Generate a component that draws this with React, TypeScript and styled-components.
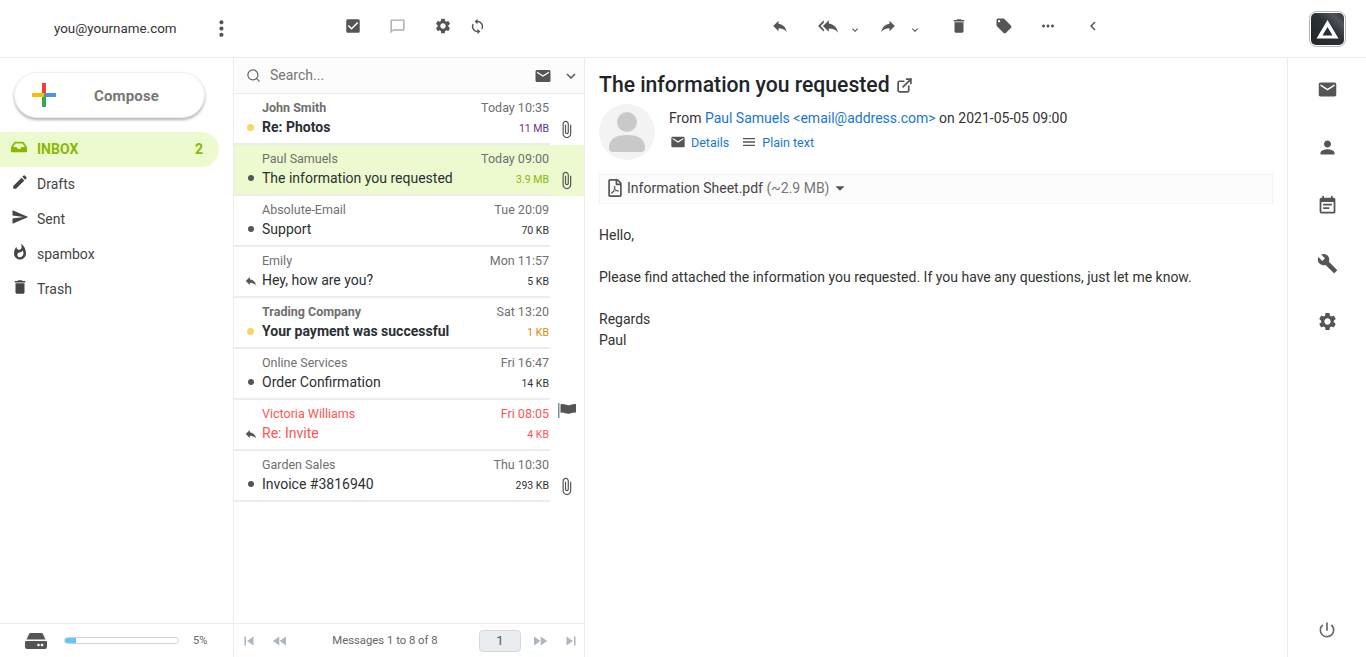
import React from "react";
import styled, { createGlobalStyle } from "styled-components";
import {
  MdMail, MdPerson, MdEventNote, MdBuild, MdSettings, MdPowerSettingsNew, MdReply, MdReplyAll,
  MdDelete, MdLocalOffer, MdMoreHoriz, MdChevronLeft, MdCheckBox, MdChatBubbleOutline, MdSync,
  MdMoreVert, MdEdit, MdSend, MdWhatshot, MdAttachFile, MdSkipPrevious, MdSkipNext, MdFastRewind,
  MdFastForward, MdMenu, MdArrowDropDown, MdKeyboardArrowDown,
} from "react-icons/md";
import { FaInbox, FaRegFilePdf } from "react-icons/fa";
import { FiExternalLink, FiSearch } from "react-icons/fi";

const Global = createGlobalStyle`
  html, body { margin: 0; padding: 0; height: 100%; background: #fff; }
  body { font-family: Roboto, "Liberation Sans", sans-serif; color: #212529; font-size: 14px; overflow: hidden; }
  * { box-sizing: border-box; }
`;

const Page = styled.div`
  width: 1366px; height: 657px; display: flex; flex-direction: column; overflow: hidden;
`;
const TopBar = styled.header`
  height: 58px; flex: none; display: flex; align-items: center; border-bottom: 1px solid #ececec; color: #555;
`;
const Account = styled.div`
  width: 234px; flex: none; display: flex; align-items: center; padding-left: 54px; font-size: 13.4px; color: #333;
`;
const AccountName = styled.span` width: 156px; `;
const ListTools = styled.div`
  width: 351px; flex: none; display: flex; align-items: center; padding-left: 110px; margin-top: -5px;
`;
const ToolSlot = styled.span<{ $w: number; $color?: string }>`
  width: ${(p) => p.$w}px; display: flex; align-items: center; color: ${(p) => p.$color || "#555"};
`;
const MailTools = styled.div`
  flex: 1; display: flex; align-items: center; padding-left: 186px; margin-top: -5px;
`;
const Caret = styled(MdKeyboardArrowDown)<{ $gap: number }>`
  margin: 8px 0 0 ${(p) => p.$gap}px;
`;
const Logo = styled.svg`
  position: absolute; left: 1309px; top: 11px;
`;
const Body = styled.div`
  flex: 1; min-height: 0; display: flex;
`;
const Sidebar = styled.aside`
  width: 234px; flex: none; display: flex; flex-direction: column; border-right: 1px solid #ececec;
`;
const ComposeButton = styled.button`
  margin: 14px 0 0 14px; width: 191px; height: 46px; flex: none; border: 1px solid #efefef; border-radius: 23px;
  background: #fff; box-shadow: 0 2px 3px rgba(0,0,0,.3); display: flex; align-items: center; padding: 0 0 0 17px;
  font-family: inherit; font-size: 15px; font-weight: 700; color: #777; letter-spacing: .15px;
`;
const ComposeLabel = styled.span` margin: 2px 0 0 38px; `;
const FolderList = styled.nav`
  margin-top: 14px; flex: 1; display: flex; flex-direction: column;
`;
const Folder = styled.div<{ $active?: boolean }>`
  width: 219px; height: 35px; display: flex; align-items: center; padding: 0 16px 2px 11px; font-size: 14px;
  border-radius: 0 18px 18px 0;
  color: ${(p) => (p.$active ? "#8ab800" : "#444")};
  background: ${(p) => (p.$active ? "#edfad0" : "transparent")};
  font-weight: ${(p) => (p.$active ? 700 : 400)};
`;
const FolderIcon = styled.span`
  width: 26px; display: flex; align-items: center; margin-top: -3px; color: inherit;
`;
const FolderName = styled.span` flex: 1; `;
const Quota = styled.div`
  height: 34px; flex: none; border-top: 1px solid #ececec; display: flex; align-items: center; padding-left: 25px; font-size: 11px; color: #666;
`;
const Track = styled.div`
  width: 115px; height: 7px; margin-left: 17px; border: 1px solid #ced4da; border-radius: 4px; overflow: hidden; background: #fff;
`;
const Fill = styled.div` height: 100%; background: #62c6f8; `;
const QuotaText = styled.span` margin-left: 14px; `;

const ListPane = styled.section`
  width: 351px; flex: none; display: flex; flex-direction: column; border-right: 1px solid #ececec;
`;
const SearchBar = styled.div`
  height: 36px; flex: none; background: #fcfcfc; border-bottom: 1px solid #ececec; display: flex; align-items: center;
  padding: 0 4px 0 12px; color: #666;
`;
const SearchHint = styled.span` flex: 1; margin: 0 0 1px 9px; font-size: 14px; color: #757575; `;
const SearchChevron = styled(MdKeyboardArrowDown)` margin-left: 10px; color: #555; `;
const Rows = styled.div` flex: 1; `;
const Row = styled.div<{ $selected?: boolean }>`
  position: relative; height: 51px; padding: 6px 0 0 28px; width: 350px;
  background: ${(p) => (p.$selected ? "#edfad0" : "#fff")};
  &::after { content: ""; position: absolute; left: 0; bottom: 0; width: 316px; height: 2px; background: #ececec; }
`;
const RowLine = styled.div<{ $gap?: number }>`
  width: 287px; display: flex; justify-content: space-between; align-items: baseline; margin-top: ${(p) => p.$gap || 0}px;
`;
const Sender = styled.span<{ $unread?: boolean; $flag?: boolean }>`
  font-size: 12.5px; line-height: 16px; font-weight: ${(p) => (p.$unread ? 700 : 400)};
  color: ${(p) => (p.$flag ? "#ff5552" : "#6f6f6f")};
`;
const Time = styled.span<{ $flag?: boolean }>`
  font-size: 12.5px; line-height: 16px; color: ${(p) => (p.$flag ? "#ff5552" : "#6f6f6f")};
`;
const Subject = styled.span<{ $unread?: boolean; $flag?: boolean }>`
  font-size: 14px; line-height: 18px; font-weight: ${(p) => (p.$unread ? 700 : 400)};
  color: ${(p) => (p.$flag ? "#ff5552" : "#2b2f33")};
`;
const Size = styled.span<{ $color?: string }>`
  font-size: 10.5px; color: ${(p) => p.$color || "#333"};
`;
const Dot = styled.span<{ $unread?: boolean }>`
  position: absolute; left: ${(p) => (p.$unread ? 13 : 14)}px; top: 30px;
  width: ${(p) => (p.$unread ? 7 : 6)}px; height: ${(p) => (p.$unread ? 7 : 6)}px; border-radius: 50%;
  background: ${(p) => (p.$unread ? "#fbd65f" : "#555")};
`;
const ReplyMark = styled(MdReply)` position: absolute; left: 10px; top: 27px; color: #555; `;
const Clip = styled(MdAttachFile)` position: absolute; left: 323px; top: 26px; color: #555; `;
const FlagMark = styled.svg` position: absolute; left: 324px; top: 3px; `;
const Pager = styled.div`
  height: 34px; flex: none; border-top: 1px solid #ececec; display: flex; align-items: center; padding-left: 6px; color: #adb5bd;
`;
const PagerIcons = styled.span`
  display: flex; align-items: center; gap: 13px;
`;
const PagerText = styled.span` width: 154px; margin-left: 19px; text-align: center; font-size: 11.3px; color: #666; `;
const PageBox = styled.span`
  width: 42px; height: 22px; border: 1px solid #d4d8dc; border-radius: 4px; background: #e9ecef; margin: 0 10px 0 17px;
  display: flex; align-items: center; justify-content: center; font-size: 13px; color: #555;
`;

const Preview = styled.main`
  flex: 1; min-width: 0; padding: 14px 14px 0; display: flex; flex-direction: column;
`;
const Title = styled.h1`
  margin: 0; font-size: 21.15px; line-height: 26px; font-weight: 500; color: #212529; display: flex; align-items: center; gap: 6px;
`;
const TitleLink = styled(FiExternalLink)` color: #555; margin-top: 1px; stroke-width: 2.4; `;
const Header = styled.div` display: flex; margin-top: 6px; `;
const Avatar = styled.div`
  width: 56px; height: 56px; flex: none; border-radius: 50%; background: #f3f3f3; display: flex; align-items: center; justify-content: center;
`;
const Meta = styled.div` margin-left: 14px; padding-top: 4px; `;
const FromLine = styled.div` line-height: 20px; color: #333; `;
const Blue = styled.span` color: #1976d2; `;
const Links = styled.div` display: flex; align-items: center; margin: 4px 0 0 1px; height: 20px; font-size: 12.5px; color: #1976d2; `;
const LinkItem = styled.span`
  display: flex; align-items: center; gap: 5px; margin-right: 12px;
  svg { color: #555; }
`;
const Attachment = styled.div`
  margin-top: 14px; width: 674px; height: 30px; background: #fcfcfc; border: 1px solid #f3f3f3; display: flex; align-items: center;
  padding: 0 0 2px 6px; color: #444; font-size: 14px; gap: 3px;
`;
const AttachSize = styled.span` color: #777; `;
const AttachDrop = styled(MdArrowDropDown)` margin-left: -4px; color: #555; `;
const Message = styled.div` margin-top: 21px; line-height: 21px; color: #333; font-size: 14px; `;
const Para = styled.p` margin: 0 0 21px; `;

const Rail = styled.aside`
  width: 79px; flex: none; border-left: 1px solid #ececec; display: flex; flex-direction: column; align-items: center; color: #555; padding: 21px 0 17px 0;
`;
const RailIcon = styled.span`
  height: 58px; flex: none; display: flex; align-items: flex-start; justify-content: center;
`;
const RailSpacer = styled.div` flex: 1; `;
const RailPower = styled.span` display: flex; color: #666; `;

const ComposeMark = () => (
  <svg width="24" height="24" viewBox="0 0 24 24">
    <rect x="10" y="0" width="4" height="12" fill="#ea4335" />
    <rect x="12" y="10" width="12" height="4" fill="#4f8ef7" />
    <rect x="10" y="12" width="4" height="12" fill="#34a853" />
    <rect x="0" y="10" width="12" height="4" fill="#fbbc05" />
  </svg>
);

const Drive = () => (
  <svg width="22" height="16" viewBox="0 0 22 16" fill="#555">
    <path d="M6 0h10c1 0 1.6.5 2 1.2L20.5 6.5H1.5L4 1.2C4.4.5 5 0 6 0z" />
    <path d="M1 8h20a1 1 0 0 1 1 1v5a2 2 0 0 1-2 2H2a2 2 0 0 1-2-2V9a1 1 0 0 1 1-1z" />
    <circle cx="13.5" cy="12" r="1.3" fill="#fff" />
    <circle cx="17" cy="12" r="1.3" fill="#fff" />
  </svg>
);

const AppLogo = () => (
  <Logo width="37" height="36" viewBox="0 0 37 36">
    <defs>
      <linearGradient id="lg" x1="0" y1="1" x2="1" y2="0">
        <stop offset="0" stopColor="#22272b" />
        <stop offset="0.55" stopColor="#2b3036" />
        <stop offset="0.8" stopColor="#50555c" />
        <stop offset="1" stopColor="#2b3036" />
      </linearGradient>
    </defs>
    <rect x="0.5" y="0.5" width="36" height="35" rx="7" fill="#fff" stroke="#b5b5b5" />
    <rect x="2" y="2" width="33" height="32" rx="5" fill="url(#lg)" />
    <path d="M18.5 9 L29.5 27.5 H7.5 Z M18.5 16 L13.5 24.5 H23.5 Z" fill="#fff" fillRule="evenodd" />
  </Logo>
);

const AvatarFigure = () => (
  <svg width="36" height="40" viewBox="0 0 36 40" fill="#c9c9c9">
    <circle cx="18" cy="10" r="10" />
    <path d="M0 36c0-9 6-13 18-13s18 4 18 13c0 3-2 4-4 4H4c-2 0-4-1-4-4z" />
  </svg>
);

const RowFlag = () => (
  <FlagMark width="19" height="15" viewBox="0 0 19 15">
    <rect x="0" y="0" width="1.5" height="15" fill="#7d8f9c" />
    <path d="M2.5 1.5C6 0 8 3 12 2c2-.5 4-1.2 6-1v8.5c-2-.2-4 .5-6 1-4 1-6-2-9.5-.8z" fill="#555" />
  </FlagMark>
);

type Msg = {
  sender: string; subject: string; time: string; size: string; unread?: boolean; selected?: boolean;
  flag?: boolean; replied?: boolean; clip?: boolean; sizeColor?: string;
};
const messages: Msg[] = [
  { sender: "John Smith", subject: "Re: Photos", time: "Today 10:35", size: "11 MB", unread: true, clip: true, sizeColor: "#6a2c91" },
  { sender: "Paul Samuels", subject: "The information you requested", time: "Today 09:00", size: "3.9 MB", selected: true, clip: true, sizeColor: "#8ab800" },
  { sender: "Absolute-Email", subject: "Support", time: "Tue 20:09", size: "70 KB" },
  { sender: "Emily", subject: "Hey, how are you?", time: "Mon 11:57", size: "5 KB", replied: true },
  { sender: "Trading Company", subject: "Your payment was successful", time: "Sat 13:20", size: "1 KB", unread: true, sizeColor: "#e08a00" },
  { sender: "Online Services", subject: "Order Confirmation", time: "Fri 16:47", size: "14 KB" },
  { sender: "Victoria Williams", subject: "Re: Invite", time: "Fri 08:05", size: "4 KB", flag: true, replied: true, sizeColor: "#ff5552" },
  { sender: "Garden Sales", subject: "Invoice #3816940", time: "Thu 10:30", size: "293 KB", clip: true },
];

const folders = [
  { name: "Drafts", icon: <MdEdit size={18} /> },
  { name: "Sent", icon: <MdSend size={18} /> },
  { name: "spambox", icon: <MdWhatshot size={18} /> },
  { name: "Trash", icon: <MdDelete size={18} /> },
];

export default function App() {
  return (
    <Page>
      <Global />
      <TopBar>
        <Account>
          <AccountName>you@yourname.com</AccountName>
          <MdMoreVert size={25} color="#555" />
        </Account>
        <ListTools>
          <ToolSlot $w={45}><MdCheckBox size={18} /></ToolSlot>
          <ToolSlot $w={45} $color="#aaa"><MdChatBubbleOutline size={17} /></ToolSlot>
          <ToolSlot $w={35}><MdSettings size={18} /></ToolSlot>
          <ToolSlot $w={30}><MdSync size={17} /></ToolSlot>
        </ListTools>
        <MailTools>
          <ToolSlot $w={47}><MdReply size={18} /></ToolSlot>
          <ToolSlot $w={61}><MdReplyAll size={20} /><Caret size={12} $gap={11} /></ToolSlot>
          <ToolSlot $w={71}><MdReply size={18} style={{ transform: "scaleX(-1)" }} /><Caret size={12} $gap={12} /></ToolSlot>
          <ToolSlot $w={45}><MdDelete size={18} /></ToolSlot>
          <ToolSlot $w={44}><MdLocalOffer size={18} /></ToolSlot>
          <ToolSlot $w={45}><MdMoreHoriz size={18} /></ToolSlot>
          <ToolSlot $w={20}><MdChevronLeft size={18} /></ToolSlot>
        </MailTools>
        <AppLogo />
      </TopBar>
      <Body>
        <Sidebar>
          <ComposeButton>
            <ComposeMark />
            <ComposeLabel>Compose</ComposeLabel>
          </ComposeButton>
          <FolderList>
            <Folder $active>
              <FolderIcon><FaInbox size={16} /></FolderIcon>
              <FolderName>INBOX</FolderName>
              <span>2</span>
            </Folder>
            {folders.map((f) => (
              <Folder key={f.name}>
                <FolderIcon>{f.icon}</FolderIcon>
                <FolderName>{f.name}</FolderName>
              </Folder>
            ))}
          </FolderList>
          <Quota>
            <Drive />
            <Track><Fill style={{ width: "10%" }} /></Track>
            <QuotaText>5%</QuotaText>
          </Quota>
        </Sidebar>
        <ListPane>
          <SearchBar>
            <FiSearch size={15} />
            <SearchHint>Search...</SearchHint>
            <MdMail size={18} color="#555" />
            <SearchChevron size={18} />
          </SearchBar>
          <Rows>
            {messages.map((m) => (
              <Row key={m.sender} $selected={m.selected}>
                {m.replied ? <ReplyMark size={14} /> : <Dot $unread={m.unread} />}
                {m.clip && <Clip size={19} />}
                {m.flag && <RowFlag />}
                <RowLine>
                  <Sender $unread={m.unread} $flag={m.flag}>{m.sender}</Sender>
                  <Time $flag={m.flag}>{m.time}</Time>
                </RowLine>
                <RowLine $gap={2}>
                  <Subject $unread={m.unread} $flag={m.flag}>{m.subject}</Subject>
                  <Size $color={m.sizeColor}>{m.size}</Size>
                </RowLine>
              </Row>
            ))}
          </Rows>
          <Pager>
            <PagerIcons>
              <MdSkipPrevious size={18} />
              <MdFastRewind size={18} />
            </PagerIcons>
            <PagerText>Messages 1 to 8 of 8</PagerText>
            <PageBox>1</PageBox>
            <PagerIcons>
              <MdFastForward size={18} />
              <MdSkipNext size={18} />
            </PagerIcons>
          </Pager>
        </ListPane>
        <Preview>
          <Title>The information you requested <TitleLink size={17} /></Title>
          <Header>
            <Avatar><AvatarFigure /></Avatar>
            <Meta>
              <FromLine>From <Blue>Paul Samuels &lt;email@address.com&gt;</Blue> on 2021-05-05 09:00</FromLine>
              <Links>
                <LinkItem><MdMail size={16} />Details</LinkItem>
                <LinkItem><MdMenu size={16} />Plain text</LinkItem>
              </Links>
            </Meta>
          </Header>
          <Attachment>
            <FaRegFilePdf size={18} color="#555" />
            <span>Information Sheet.pdf <AttachSize>(~2.9 MB)</AttachSize></span>
            <AttachDrop size={22} />
          </Attachment>
          <Message>
            <Para>Hello,</Para>
            <Para>Please find attached the information you requested. If you have any questions, just let me know.</Para>
            <Para>Regards<br />Paul</Para>
          </Message>
        </Preview>
        <Rail>
          <RailIcon><MdMail size={21} /></RailIcon>
          <RailIcon><MdPerson size={21} /></RailIcon>
          <RailIcon><MdEventNote size={21} /></RailIcon>
          <RailIcon><MdBuild size={21} /></RailIcon>
          <RailIcon><MdSettings size={21} /></RailIcon>
          <RailSpacer />
          <RailPower><MdPowerSettingsNew size={20} /></RailPower>
        </Rail>
      </Body>
    </Page>
  );
}
